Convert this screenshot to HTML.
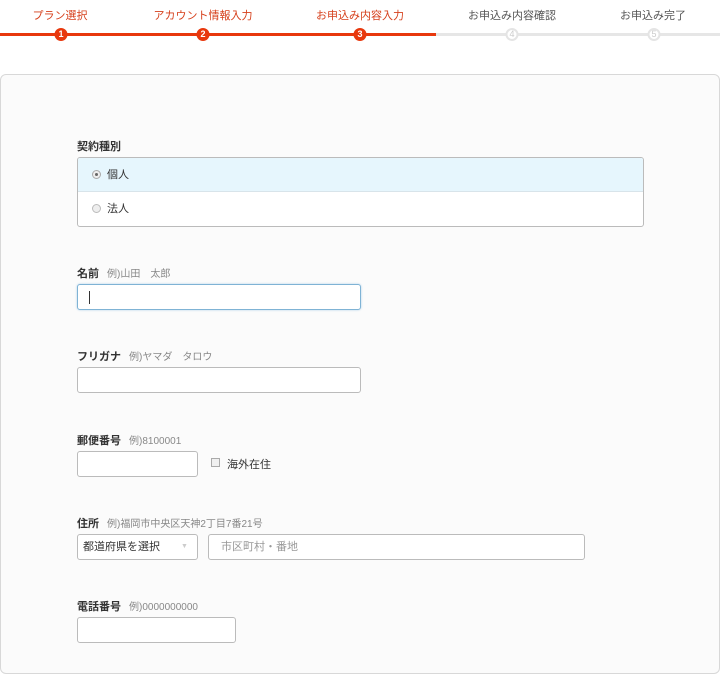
<!DOCTYPE html>
<html><head><meta charset="utf-8"><style>
*{box-sizing:border-box;margin:0;padding:0}
body{width:720px;height:661px;overflow:hidden;background:#fff;font-family:"Liberation Sans","Noto Sans CJK JP",sans-serif;position:relative;color:#333}
.a{position:absolute}
.st{font-size:11px;top:7px;transform:translateX(-50%);white-space:nowrap}
.c{width:13px;height:13px;border-radius:50%;top:28px;font-size:9px;font-weight:bold;text-align:center;line-height:13px;transform:translateX(-50%)}
.r{background:#e8380d;color:#fff}
.g{background:#fff;border:2px solid #e4e4e4;color:#ccc;line-height:9px;font-weight:normal}
.lbl{font-size:11px;font-weight:bold;color:#333}
.lbl span{font-weight:normal;color:#888;font-size:10px;margin-left:8px}
.in{border:1px solid #bbb;border-radius:3px;background:#fff;height:26px}
</style></head><body>
<div class="a" style="left:0;top:33px;width:436px;height:3px;background:#e8380d"></div>
<div class="a" style="left:436px;top:33px;width:284px;height:3px;background:#e6e6e6"></div>
<div class="a st" style="left:60px;color:#d6401c">プラン選択</div>
<div class="a st" style="left:203px;color:#d6401c">アカウント情報入力</div>
<div class="a st" style="left:360px;color:#d6401c">お申込み内容入力</div>
<div class="a st" style="left:512px;color:#555">お申込み内容確認</div>
<div class="a st" style="left:653px;color:#555">お申込み完了</div>
<div class="a c r" style="left:61px">1</div>
<div class="a c r" style="left:203px">2</div>
<div class="a c r" style="left:360px">3</div>
<div class="a c g" style="left:512px">4</div>
<div class="a c g" style="left:654px">5</div>
<div class="a" style="left:0;top:74px;width:720px;height:600px;border:1px solid #d8d8d8;border-radius:6px;background:#fbfbfb"></div>

<div class="a lbl" style="left:77px;top:138px">契約種別</div>
<div class="a" style="left:77px;top:157px;width:567px;height:70px;border:1px solid #bbb;border-radius:3px;background:#fff;overflow:hidden">
<div style="height:34px;background:#e6f6fd;border-bottom:1px solid #d8e4ea;font-size:11px;line-height:34px;padding-left:14px"><span style="display:inline-block;width:9px;height:9px;border-radius:50%;border:1px solid #aaa;background:#eee;vertical-align:-1px;margin-right:6px;position:relative"><span style="position:absolute;left:2px;top:2px;width:3px;height:3px;border-radius:50%;background:#666"></span></span>個人</div>
<div style="height:34px;font-size:11px;line-height:34px;padding-left:14px"><span style="display:inline-block;width:9px;height:9px;border-radius:50%;border:1px solid #bbb;background:#eee;vertical-align:-1px;margin-right:6px"></span>法人</div>
</div>

<div class="a lbl" style="left:77px;top:265px">名前<span>例)山田　太郎</span></div>
<div class="a in" style="left:77px;top:284px;width:284px;border-color:#7fb3d5;box-shadow:0 0 2px #aed0e8"><div style="position:absolute;left:11px;top:6px;width:1px;height:13px;background:#333"></div></div>

<div class="a lbl" style="left:77px;top:348px">フリガナ<span>例)ヤマダ　タロウ</span></div>
<div class="a in" style="left:77px;top:367px;width:284px"></div>

<div class="a lbl" style="left:77px;top:432px">郵便番号<span>例)8100001</span></div>
<div class="a in" style="left:77px;top:451px;width:121px"></div>
<div class="a" style="left:211px;top:458px;width:9px;height:9px;border:1px solid #aaa;background:#f0f0f0"></div>
<div class="a" style="left:227px;top:456px;font-size:11px">海外在住</div>

<div class="a lbl" style="left:77px;top:515px">住所<span>例)福岡市中央区天神2丁目7番21号</span></div>
<div class="a in" style="left:77px;top:534px;width:121px;font-size:11px;line-height:24px;padding-left:5px">都道府県を選択<span style="position:absolute;left:103px;color:#ccc;font-size:7px">▼</span></div>
<div class="a in" style="left:208px;top:534px;width:377px;font-size:11px;line-height:24px;padding-left:12px;color:#999">市区町村・番地</div>

<div class="a lbl" style="left:77px;top:598px">電話番号<span>例)0000000000</span></div>
<div class="a in" style="left:77px;top:617px;width:159px"></div>
</body></html>
